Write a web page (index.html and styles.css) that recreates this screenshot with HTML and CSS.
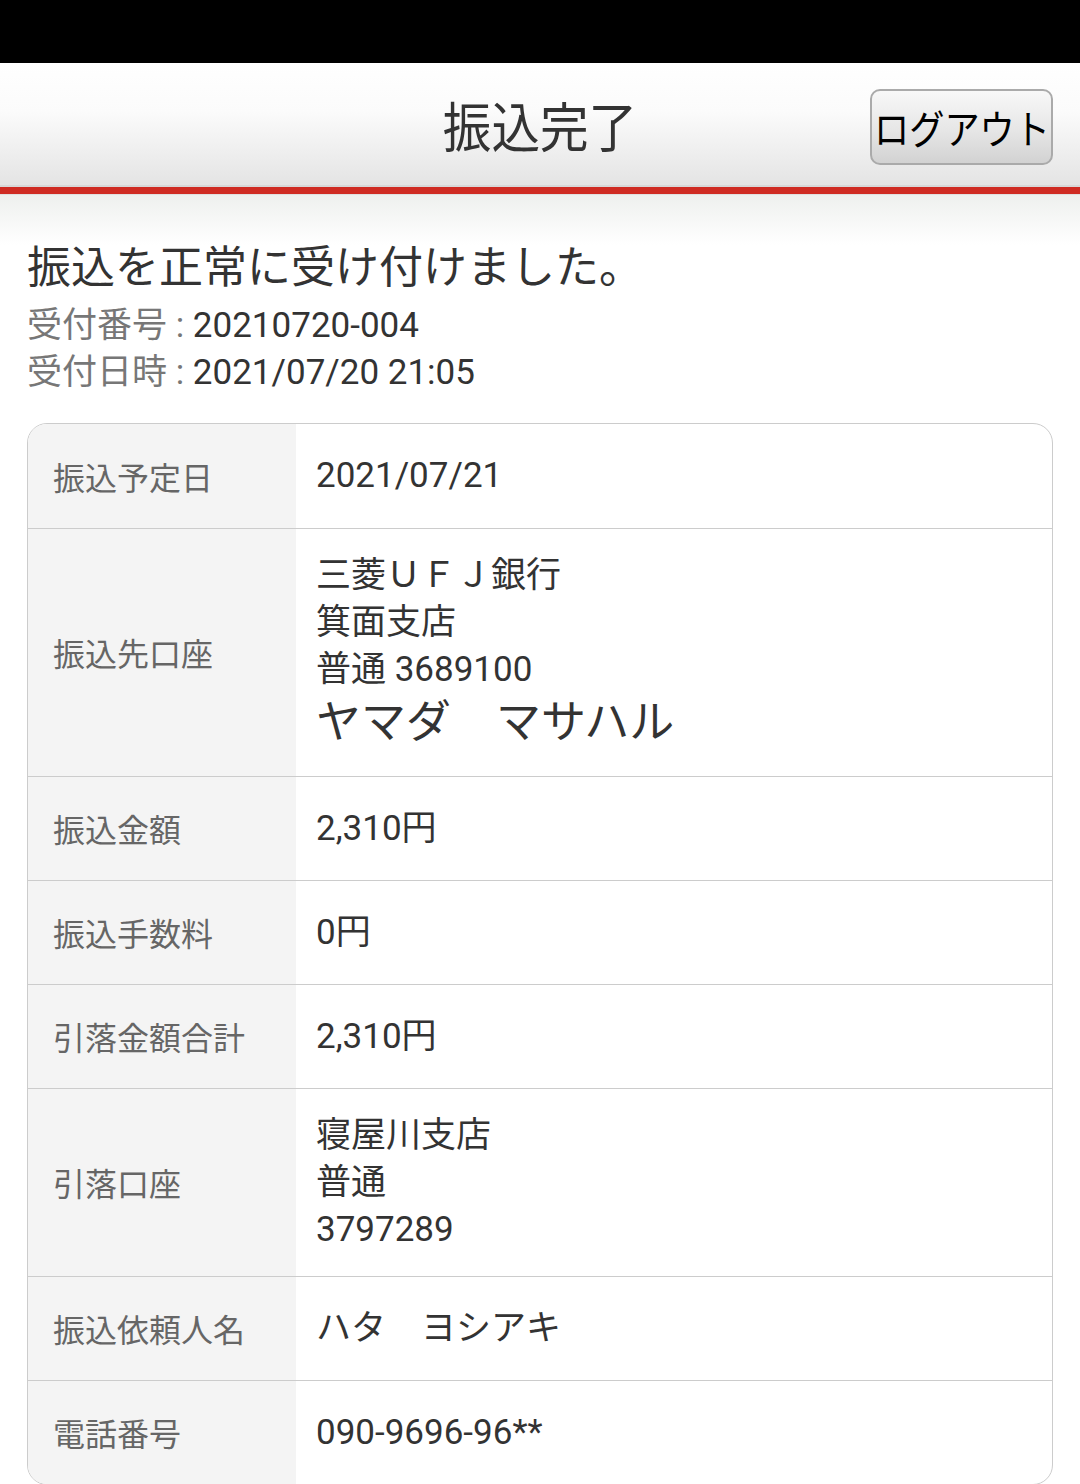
FILE: index.html
```html
<html>
	<head>
		<meta charset="utf-8">
		<title>振込完了</title>
		<link rel="stylesheet" href="styles.css">
	</head>
	<body>
		<div class="statusbar"></div>
		<div class="header">
			<div></div>
			<h1 class="title"><span>振込完了</span></h1>
			<button class="logout"><span>ログアウト</span></button>
		</div>
		<div class="redline"></div>
		<div class="content">
			<p class="message">振込を正常に受け付けました。</p>
			<div class="receipt">
				<div><span class="key">受付番号 :</span> 20210720-004</div>
				<div><span class="key">受付日時 :</span> 2021/07/20 21:05</div>
			</div>
			<div class="detail">
				<table>
					<tr>
						<th>振込予定日</th>
						<td>2021/07/21</td>
					</tr>
					<tr>
						<th>振込先口座</th>
						<td>三菱ＵＦＪ銀行<br>箕面支店<br>普通 3689100<br><span class="kana">ヤマダ　マサハル</span></td>
					</tr>
					<tr>
						<th>振込金額</th>
						<td>2,310円</td>
					</tr>
					<tr>
						<th>振込手数料</th>
						<td>0円</td>
					</tr>
					<tr>
						<th>引落金額合計</th>
						<td>2,310円</td>
					</tr>
					<tr>
						<th>引落口座</th>
						<td>寝屋川支店<br>普通<br>3797289</td>
					</tr>
					<tr>
						<th>振込依頼人名</th>
						<td>ハタ　ヨシアキ</td>
					</tr>
					<tr>
						<th>電話番号</th>
						<td>090-9696-96**</td>
					</tr>
				</table>
			</div>
		</div>
	</body>
</html>
```

FILE: styles.css
```css
body
{
	margin:0;
	font-family:Roboto, "Noto Sans CJK JP", sans-serif;
	color:#333;
	background:#fff;
}
.statusbar
{
	height:63px;
	background:#000;
}
.header
{
	height:122px;
	display:grid;
	grid-template-columns:1fr auto 1fr;
	align-items:center;
	background:linear-gradient(#fff, #fbfbfb 40%, #e4e4e4);
	border-bottom:2px solid #d8d8d8;
}
.title
{
	margin:0;
	font-weight:normal;
	font-size:54px;
	color:#333;
	font-family:"Noto Sans CJK JP", sans-serif;
}
.title span
{
	display:inline-block;
	transform:scaleX(0.9);
}
.logout
{
	justify-self:end;
	margin-right:27px;
	margin-top:6px;
	width:183px;
	height:76px;
	padding:0;
	display:flex;
	align-items:center;
	justify-content:center;
	border:2px solid #aaa;
	border-radius:10px;
	background:linear-gradient(#f8f8f8, #e6e6e6 55%, #d2d2d2);
	color:#000;
	font-size:40px;
	font-family:"Noto Sans CJK JP", sans-serif;
	overflow:visible;
	white-space:nowrap;
}
.logout span
{
	display:inline-block;
	flex-shrink:0;
	transform:scaleX(0.88);
}
.redline
{
	height:7px;
	background:#cf2b23;
	border-bottom:1px solid #e0e0e0;
}
.content
{
	padding:45px 27px 0 27px;
	background:linear-gradient(#eef0ee, #fff 50px);
}
.message
{
	margin:0;
	font-size:44px;
	line-height:56px;
	color:#333;
}
.receipt
{
	margin-top:6px;
	font-size:35px;
	line-height:47px;
	color:#333;
}
.key
{
	color:#777;
}
.detail
{
	margin-top:27px;
	border:1.5px solid #ccc;
	border-radius:20px;
	overflow:hidden;
	background:#fff;
}
table
{
	width:100%;
	border-collapse:collapse;
}
tr
{
	height:104px;
	border-top:1.5px solid #ccc;
}
tr:first-child
{
	border-top:none;
}
th
{
	width:268px;
	box-sizing:border-box;
	padding:0 0 0 25px;
	background:#f4f4f4;
	text-align:left;
	font-weight:normal;
	font-size:32px;
	color:#666;
	vertical-align:middle;
}
td
{
	padding:23px 20px 23px 20px;
	font-size:35px;
	line-height:47px;
	color:#333;
	vertical-align:middle;
}
.kana
{
	font-size:45px;
	line-height:60px;
}
```
